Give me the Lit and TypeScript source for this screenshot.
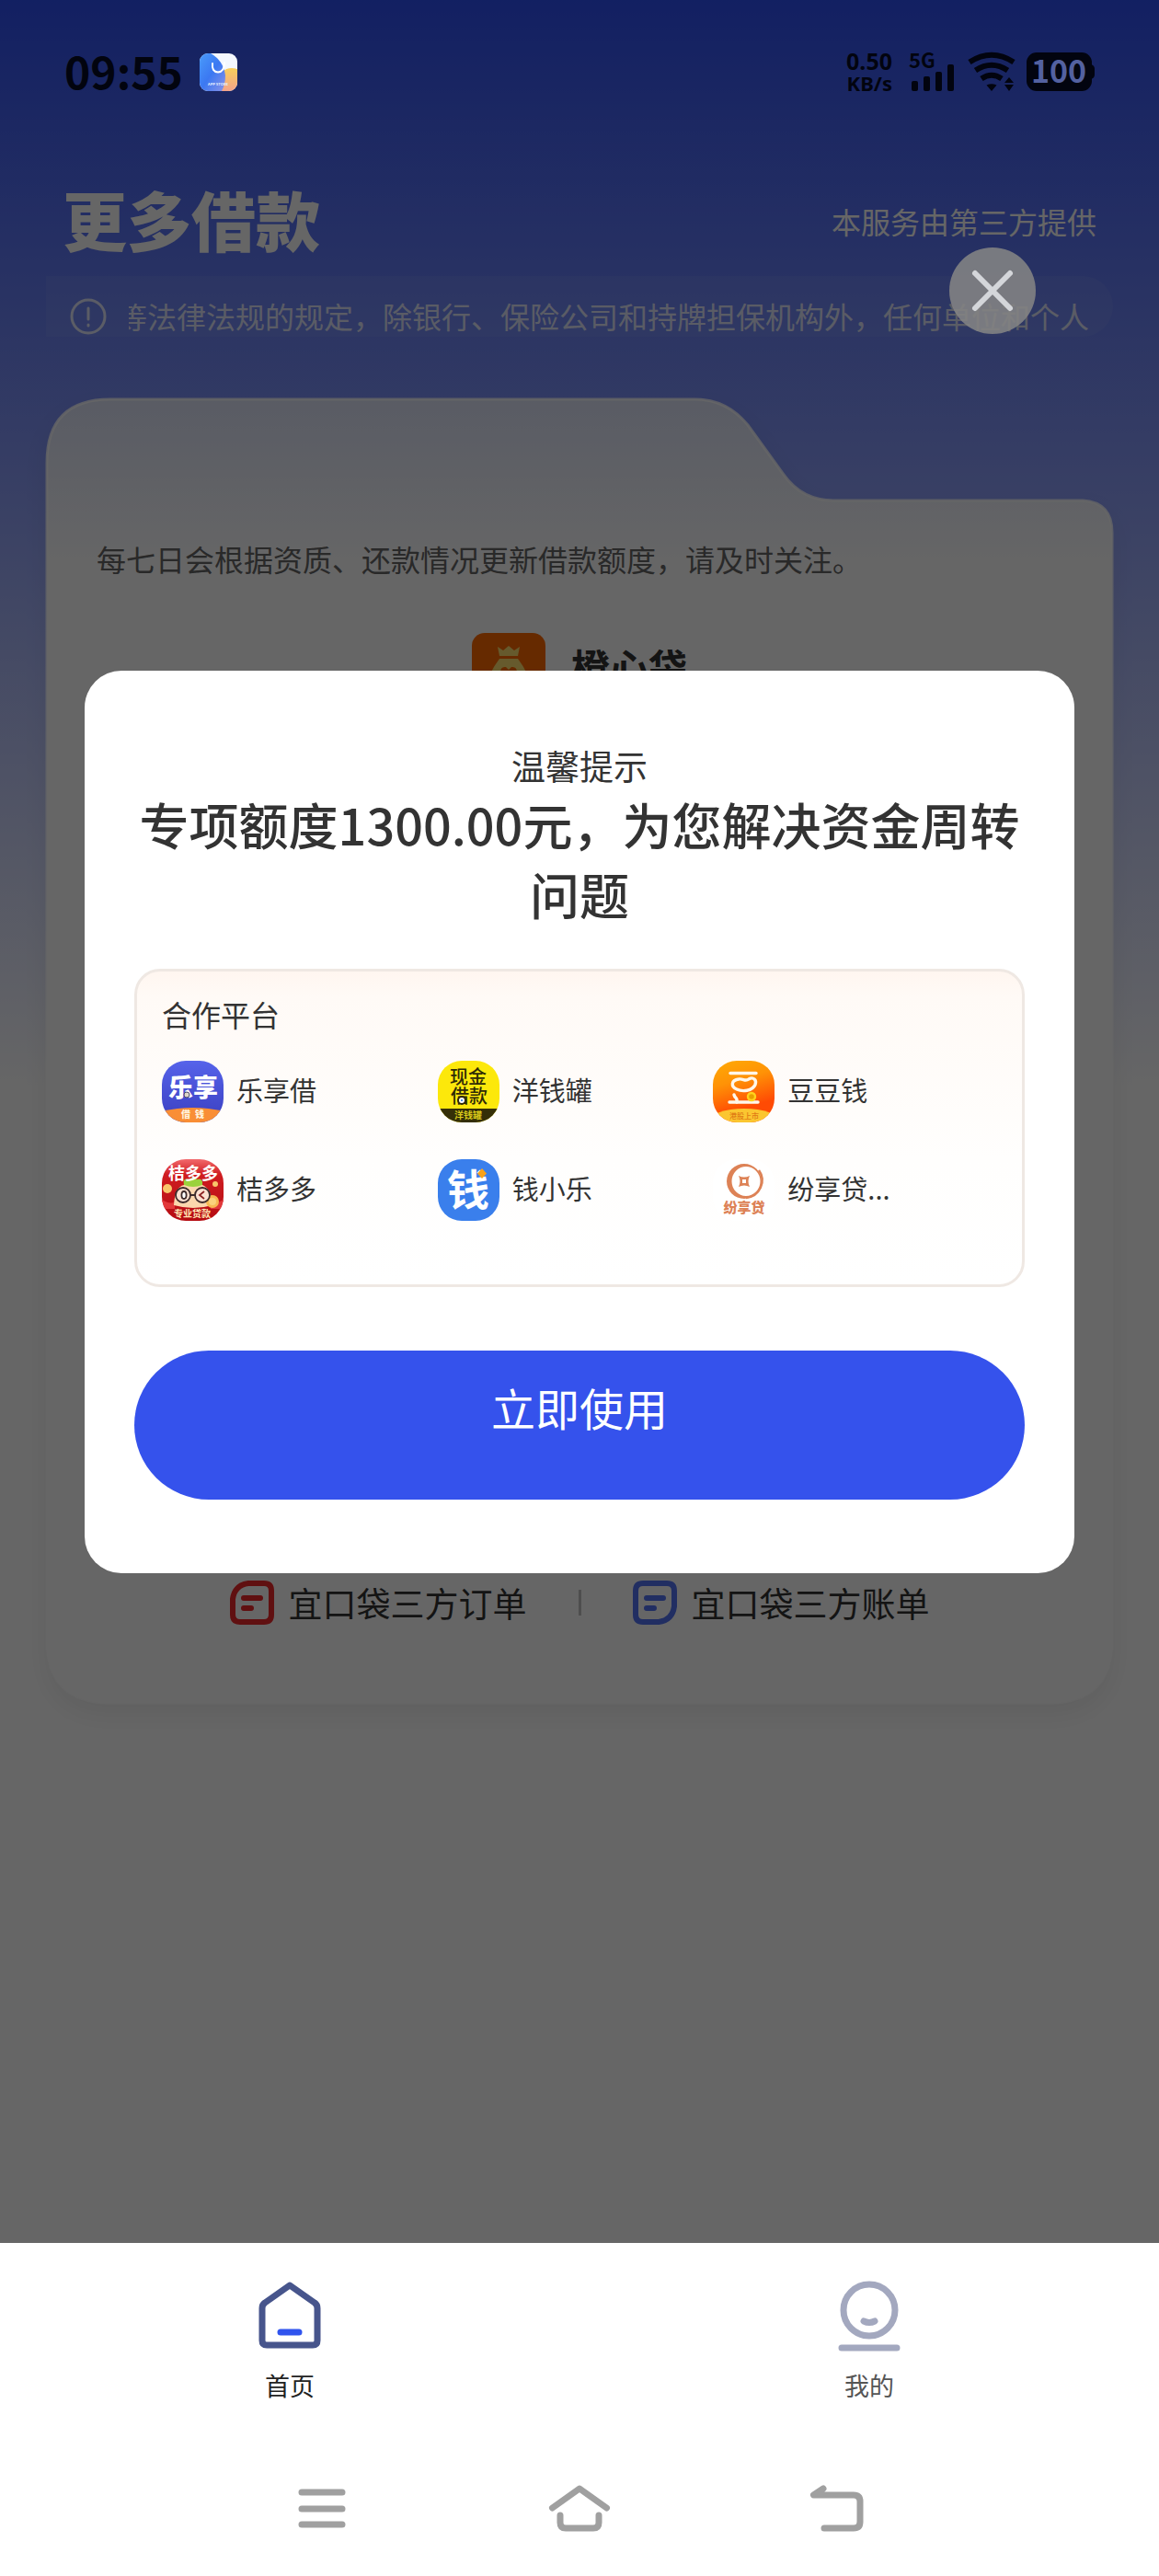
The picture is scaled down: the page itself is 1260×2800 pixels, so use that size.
import { LitElement, html, svg, css, type TemplateResult } from "lit";
import { customElement, state } from "lit/decorators.js";

interface Platform {
  name: string;
  logo: TemplateResult;
}

const logo = (body: TemplateResult) =>
  html`<svg class="logo" viewBox="0 0 67 67" aria-hidden="true">${body}</svg>`;

const platforms: Platform[] = [
  {
    name: "乐享借",
    logo: logo(svg`
      <defs><linearGradient id="lx" x1="0" y1="0" x2="0" y2="1">
        <stop offset="0" stop-color="#5663ea"/><stop offset="1" stop-color="#3a3fc0"/>
      </linearGradient></defs>
      <rect width="67" height="67" fill="url(#lx)"/>
      <text class="mark" x="34" y="39" font-size="27" fill="#fff">乐享</text>
      <circle cx="27" cy="37" r="3" fill="#ddd6c8" stroke="#4a4a6a" stroke-width="1"/>
      <path d="M0 55Q34 47 67 55V67H0Z" fill="#f98e35"/>
      <text class="mark" x="26" y="62" font-size="10" fill="#fff3dc">借</text>
      <text class="mark" x="41" y="62" font-size="10" fill="#fff3dc">钱</text>`),
  },
  {
    name: "洋钱罐",
    logo: logo(svg`
      <rect width="67" height="67" fill="#fce80b"/>
      <text class="mark thin" x="33" y="25" font-size="20" fill="#2e2a06">现金</text>
      <text class="mark thin" x="34" y="46" font-size="20" fill="#2e2a06">借款</text>
      <circle cx="26" cy="43" r="4" fill="#fff" stroke="#2e2a06" stroke-width="2"/>
      <circle cx="26" cy="43" r="1" fill="#1b6fd0"/>
      <rect y="52" width="67" height="15" fill="#352f08"/>
      <text class="mark bold" x="33" y="63" font-size="10" fill="#d9c91a">洋钱罐</text>`),
  },
  {
    name: "豆豆钱",
    logo: logo(svg`
      <defs><linearGradient id="dd" x1="0" y1="0" x2="0.3" y2="1">
        <stop offset="0" stop-color="#ffab05"/><stop offset="0.4" stop-color="#ff9206"/><stop offset="0.85" stop-color="#ff4b04"/>
      </linearGradient></defs>
      <rect width="67" height="67" fill="url(#dd)"/>
      <g fill="none" stroke="#fff7ea" stroke-width="3.4" stroke-linecap="round" stroke-linejoin="round">
        <path d="M19 13.5H47"/>
        <path d="M28 20C33 19 35 23 39 20C44 17 48 21 46 26C43 33 32 34 26 31C19 28 20 21 28 20Z"/>
        <path d="M23 37C24 41 27 40 26 45"/>
        <path d="M18 45H49"/>
      </g>
      <circle cx="42" cy="39" r="4" fill="#e8a000" stroke="#ffd21c" stroke-width="2.4"/>
      <ellipse cx="34" cy="66" rx="38" ry="14" fill="#fbc630"/>
      <text class="mark thin" x="34" y="63" font-size="8" fill="#e07a14">港股上市</text>`),
  },
  {
    name: "桔多多",
    logo: logo(svg`
      <defs><linearGradient id="jd" x1="0" y1="0" x2="0" y2="1">
        <stop offset="0" stop-color="#f2696c"/><stop offset="0.25" stop-color="#cf1c20"/><stop offset="1" stop-color="#b50c12"/>
      </linearGradient></defs>
      <rect width="67" height="67" fill="url(#jd)"/>
      <path d="M0 44Q10 50 14 46V54H0ZM67 44Q57 50 53 46V54H67Z" fill="#e2383a"/>
      <path d="M13 50Q14 30 24 28Q34 22 44 28Q54 32 55 50Q34 56 13 50Z" fill="#fbd7ad"/>
      <path d="M24 28Q22 20 30 22Q34 17 38 22Q45 20 44 28Q34 32 24 28Z" fill="#9bd23c"/>
      <circle cx="6" cy="32" r="5" fill="#f9c56a"/>
      <circle cx="58" cy="27" r="3" fill="#f9c56a"/>
      <circle cx="55" cy="46" r="7" fill="#f7b953"/>
      <circle cx="55" cy="46" r="4" fill="#fbd27c"/>
      <g fill="#fbe0d0" stroke="#3c2b2b" stroke-width="1.8">
        <circle cx="23" cy="39" r="8"/><circle cx="44" cy="39" r="8"/>
        <path d="M31 39H36" fill="none"/>
        <ellipse cx="24" cy="39" rx="2.6" ry="4" fill="#fff"/>
        <path d="M46 35L41 39L46 43" fill="none" stroke="#8c2323"/>
      </g>
      <text class="mark bold" x="34" y="22" font-size="18" fill="#fff">桔多多</text>
      <text class="mark bold" x="33" y="63" font-size="10" fill="#ffe7b5">专业贷款</text>`),
  },
  {
    name: "钱小乐",
    logo: logo(svg`
      <rect width="67" height="67" fill="#3a7fec"/>
      <text class="mark bold" x="33" y="50" font-size="46" fill="#fff">钱</text>
      <path d="M48 10L53 15.500L48 21L43 15.500Z" fill="#f9a11b"/>`),
  },
  {
    name: "纷享贷...",
    logo: logo(svg`
      <rect width="67" height="67" fill="#fff"/>
      <path fill-rule="evenodd" d="M34 5A19 19 0 1 1 34 43A19 19 0 1 1 34 5ZM36 8A15.500 16 0 1 0 36 40A15.500 16 0 1 0 36 8Z" fill="#dd8256"/>
      <path d="M50 12A19 19 0 0 1 36 42" fill="none" stroke="#dd8256" stroke-width="2.500"/>
      <path fill-rule="evenodd" d="M28 18Q34 21 40 18Q37 24 40 30Q34 27 28 30Q31 24 28 18ZM32 22V26H36V22Z" fill="#dd8256"/>
      <text class="mark" x="34" y="58" font-size="15" fill="#dd8256">纷享贷</text>`),
  },
];

@customElement("app-root")
export class AppRoot extends LitElement {
  @state() private open = true;

  static styles = css`
    :host {
      display: block;
      font-family: "Noto Sans CJK SC", "Noto Sans", sans-serif;
      color: #333;
    }
    * {
      box-sizing: border-box;
    }
    h1, h2, p, ul {
      margin: 0;
      padding: 0;
    }
    svg {
      display: block;
      flex: none;
      overflow: visible;
    }
    button {
      border: 0;
      padding: 0;
      background: none;
      font: inherit;
      color: inherit;
      cursor: pointer;
    }
    a {
      color: inherit;
      text-decoration: none;
    }
    .screen {
      min-height: 100vh;
      display: flex;
      flex-direction: column;
      background: #fff;
    }
    .view {
      position: relative;
      flex: 1;
      background: linear-gradient(#2f50f5 0, #fff 1180px);
    }

    .status {
      position: relative;
      z-index: 2;
      display: flex;
      align-items: center;
      gap: 18px;
      height: 156px;
      padding: 0 70px;
      color: #02040f;
    }
    .time {
      font-size: 48px;
      line-height: 60px;
      padding-bottom: 4px;
      font-weight: 700;
    }
    .signals {
      display: flex;
      align-items: center;
      gap: 12px;
      margin-left: auto;
    }
    .rate {
      display: flex;
      flex-direction: column;
      align-items: flex-end;
      font-family: "Noto Sans", sans-serif;
      font-size: 22px;
      line-height: 24px;
      font-weight: 700;
      margin-right: 6px;
    }
    .rate .value {
      font-size: 25px;
    }
    .cell text {
      font-size: 22px;
      font-weight: 700;
    }
    .battery text {
      font-size: 34px;
      font-weight: 700;
      text-anchor: middle;
    }

    .head {
      display: flex;
      align-items: center;
      justify-content: space-between;
      height: 144px;
      padding: 32px 68px 8px;
      color: #fff;
    }
    .head h1 {
      font-size: 70px;
      line-height: 88px;
      padding-bottom: 4px;
      font-weight: 900;
    }
    .head p {
      font-size: 32px;
      line-height: 40px;
      font-weight: 400;
    }
    .notice {
      display: flex;
      align-items: flex-end;
      gap: 24px;
      height: 66px;
      margin: 0 50px;
      padding: 0 26px;
      border-radius: 0 33px 33px 0;
      background: rgba(255, 255, 255, 0.06);
      color: rgba(255, 255, 255, 0.8);
    }
    .ticker {
      display: flex;
      flex: 1;
      min-width: 0;
      justify-content: flex-end;
      overflow: hidden;
      white-space: nowrap;
      font-size: 32px;
      line-height: 46px;
      font-weight: 400;
    }

    .folder {
      position: relative;
      display: flex;
      flex-direction: column;
      justify-content: space-between;
      min-height: 1419px;
      margin: 67px 50px 0;
      padding: 150px 55px 84px;
    }
    .shape {
      position: absolute;
      inset: 0;
      width: 100%;
      height: 100%;
      filter: drop-shadow(0 12px 12px rgba(0, 0, 0, 0.06));
    }
    .intro, .links {
      position: relative;
    }
    .tip {
      font-size: 32px;
      line-height: 48px;
      color: #666;
    }
    .brand {
      display: flex;
      align-items: center;
      justify-content: center;
      gap: 28px;
      margin-top: 57px;
    }
    .brand h2 {
      font-size: 42px;
      line-height: 60px;
      padding-bottom: 8px;
      font-weight: 700;
      color: #333;
    }
    .links {
      display: flex;
      align-items: center;
      justify-content: center;
      gap: 56px;
      font-size: 37px;
      line-height: 52px;
    }
    .links a {
      display: flex;
      align-items: center;
      gap: 16px;
    }
    .bar {
      width: 3px;
      height: 28px;
      background: #c4c4c4;
    }

    .backdrop {
      position: absolute;
      inset: 0;
      z-index: 1;
      display: flex;
      align-items: center;
      justify-content: center;
      padding: 0 92px;
      background: rgba(0, 0, 0, 0.6);
    }
    .dialog {
      position: relative;
      width: 100%;
      padding: 77px 54px 80px;
      border-radius: 40px;
      background: #fff;
      text-align: center;
    }
    .lead {
      font-size: 37px;
      line-height: 52px;
    }
    .headline {
      font-size: 54px;
      line-height: 76px;
      font-weight: 500;
    }
    .close {
      position: absolute;
      top: -459px;
      right: 42px;
    }
    .partners {
      min-height: 346px;
      margin: 43px 0 69px;
      padding: 22px 36px 22px 27px;
      border: 3px solid #efe8e3;
      border-radius: 28px;
      background: linear-gradient(#fff6f0 0, #fffaf6 27px, #fffefd 60%, #fff);
      text-align: left;
    }
    .partners p {
      font-size: 32px;
      line-height: 48px;
    }
    .partners ul {
      display: grid;
      grid-template-columns: repeat(3, 1fr);
      gap: 40px 0;
      margin-top: 27px;
      list-style: none;
    }
    .partners li {
      display: flex;
      align-items: center;
      gap: 14px;
      font-size: 29px;
      line-height: 40px;
    }
    .partners li span {
      padding-bottom: 4px;
    }
    .logo {
      width: 67px;
      height: 67px;
      border-radius: 26px;
      overflow: hidden;
    }
    .mark {
      font-weight: 900;
      text-anchor: middle;
    }
    .mark.bold {
      font-weight: 700;
    }
    .mark.thin {
      font-weight: 500;
    }
    .primary {
      display: block;
      width: 100%;
      height: 162px;
      padding-bottom: 40px;
      border-radius: 81px;
      background: #3552ec;
      color: #fff;
      font-size: 48px;
      line-height: 64px;
    }

    .tabs {
      display: grid;
      grid-template-columns: 1fr 1fr;
      height: 216px;
      padding-top: 40px;
      background: #fff;
    }
    .tabs a {
      display: flex;
      flex-direction: column;
      align-items: center;
      gap: 15px;
      font-size: 27px;
      line-height: 40px;
      color: #555;
    }
    .tabs .on {
      color: #222;
    }
    .system {
      display: grid;
      grid-template-columns: repeat(3, 280px);
      justify-content: center;
      height: 146px;
      background: #fff;
    }
    .system button {
      display: flex;
      align-items: center;
      justify-content: center;
    }
  `;

  private close() {
    this.open = false;
  }

  private renderStatus() {
    return html`
      <div class="status">
        <span class="time">09:55</span>
        <svg width="41" height="41" viewBox="0 0 41 41" aria-hidden="true">
          <defs>
            <clipPath id="store"><rect width="41" height="41" rx="9" /></clipPath>
            <linearGradient id="blue" x1="0" y1="0" x2="1" y2="1">
              <stop offset="0" stop-color="#4a9bfa" /><stop offset="0.5" stop-color="#3b78f2" /><stop offset="1" stop-color="#8b93e8" />
            </linearGradient>
            <linearGradient id="warm" x1="0" y1="0" x2="0" y2="1">
              <stop offset="0" stop-color="#f8cf5b" /><stop offset="1" stop-color="#f39a94" />
            </linearGradient>
          </defs>
          <g clip-path="url(#store)">
            <rect width="41" height="41" fill="#f4f8ff" />
            <circle cx="35" cy="31" r="15" fill="url(#warm)" />
            <path d="M0 0H12Q26 8 28 24Q28 34 24 41H0Z" fill="url(#blue)" />
          </g>
          <path d="M14 11Q13 20 20 20.500Q27 20 27 10" fill="none" stroke="#fff" stroke-width="2" stroke-linecap="round" />
          <text x="20" y="35" font-size="4" font-weight="700" fill="#e5efff" text-anchor="middle">APP STORE</text>
        </svg>
        <div class="signals">
          <div class="rate"><span class="value">0.50</span><span>KB/s</span></div>
          <svg class="cell" width="52" height="42" viewBox="0 0 52 42" aria-label="5G">
            <text x="0" y="17" fill="#02040f">5G</text>
            <g fill="#02040f">
              <rect x="3" y="31" width="7" height="11" rx="2" />
              <rect x="16" y="26" width="7" height="16" rx="2" />
              <rect x="29" y="21" width="7" height="21" rx="2" />
              <rect x="42" y="13" width="7" height="29" rx="2" />
            </g>
          </svg>
          <svg width="52" height="42" viewBox="0 0 52 42" aria-label="Wi-Fi">
            <g fill="none" stroke="#02040f" stroke-width="6">
              <path d="M2 10.500Q26 -5 50 10.500" />
              <path d="M8.500 19.500Q26 8 43.500 19.500" />
              <path d="M15 28.500Q26 21 37 28.500" />
            </g>
            <path d="M20.500 35.500Q26 33 31.500 35.500L26 42Z" fill="#02040f" />
            <path d="M45 27L50 33H40ZM45 42L50 35H40Z" fill="#02040f" />
          </svg>
          <svg class="battery" width="74" height="42" viewBox="0 0 74 42" aria-label="100%">
            <rect width="71" height="42" rx="11" fill="#02040f" />
            <path d="M70 13Q74 14 74 18V24Q74 28 70 29Z" fill="#02040f" />
            <text x="35" y="33" fill="#5361a0">100</text>
          </svg>
        </div>
      </div>
    `;
  }

  private renderFolder() {
    return html`
      <section class="folder">
        <svg class="shape" viewBox="0 0 1160 1419" preserveAspectRatio="none" aria-hidden="true">
          <defs>
            <linearGradient id="paper" gradientUnits="userSpaceOnUse" x1="0" y1="0" x2="0" y2="180">
              <stop offset="0" stop-color="#dfe5fb" /><stop offset="1" stop-color="#fff" />
            </linearGradient>
          </defs>
          <path
            d="M70 1H706Q740 1 763 29L802 83Q822 111 856 111H1127Q1159 113 1159 146V1349Q1159 1418 1090 1418H70Q1 1418 1 1349V70Q1 1 70 1Z"
            fill="url(#paper)" stroke="#fff" stroke-opacity="0.8" stroke-width="3" />
        </svg>
        <div class="intro">
          <p class="tip">每七日会根据资质、还款情况更新借款额度，请及时关注。</p>
          <div class="brand">
            <svg width="80" height="80" viewBox="0 0 80 80" aria-hidden="true">
              <rect width="80" height="80" rx="14" fill="#ff6a00" />
              <path d="M28 15L34 19L40 14L46 19L52 15L50 25H30Z" fill="#ffe070" />
              <path d="M30 28H50Q62 44 62 54Q62 68 40 68Q18 68 18 54Q18 44 30 28Z" fill="#ffe070" />
              <path d="M40 52L31 43Q31 36 37 37L40 40L43 37Q49 36 49 43Z" fill="#ff6a00" />
            </svg>
            <h2>橙心袋</h2>
          </div>
        </div>
        <nav class="links">
          <a href="#orders">
            <svg width="48" height="48" viewBox="0 0 48 48" fill="none" stroke="#f0282c" stroke-width="6" stroke-linecap="round" aria-hidden="true">
              <path d="M20 3H37Q45 3 45 11V37Q45 45 37 45H11Q3 45 3 37V20Q5 5 20 3Z" />
              <path d="M15 19H33M15 30H23" />
            </svg>
            宜口袋三方订单
          </a>
          <span class="bar"></span>
          <a href="#bills">
            <svg width="48" height="48" viewBox="0 0 48 48" fill="none" stroke="#5474f4" stroke-width="6" stroke-linecap="round" aria-hidden="true">
              <path d="M11 3H37Q45 3 45 11V28Q43 43 28 45H11Q3 45 3 37V11Q3 3 11 3Z" />
              <path d="M15 19H33M15 30H23" />
            </svg>
            宜口袋三方账单
          </a>
        </nav>
      </section>
    `;
  }

  private renderDialog() {
    return html`
      <div class="backdrop">
        <div class="dialog" role="dialog" aria-modal="true" aria-labelledby="headline">
          <button class="close" aria-label="关闭" @click=${this.close}>
            <svg width="94" height="94" viewBox="0 0 94 94">
              <circle cx="47" cy="46" r="47" fill="#848484" fill-opacity="0.88" />
              <path d="M28 27L66 65M66 27L28 65" stroke="#d4d6da" stroke-width="6" stroke-linecap="round" />
            </svg>
          </button>
          <p class="lead">温馨提示</p>
          <h2 class="headline" id="headline">专项额度1300.00元，为您解决资金周转问题</h2>
          <div class="partners">
            <p>合作平台</p>
            <ul>
              ${platforms.map((p) => html`<li>${p.logo}<span>${p.name}</span></li>`)}
            </ul>
          </div>
          <button class="primary" @click=${this.close}>立即使用</button>
        </div>
      </div>
    `;
  }

  render() {
    return html`
      <div class="screen">
        <main class="view">
          ${this.renderStatus()}
          <header class="head">
            <h1>更多借款</h1>
            <p>本服务由第三方提供</p>
          </header>
          <div class="notice">
            <svg width="40" height="42" viewBox="0 0 40 42" fill="none" stroke="currentColor" stroke-width="3" stroke-linecap="round" aria-hidden="true">
              <circle cx="20" cy="20" r="18" />
              <path d="M20 11V23M20 29V30" />
            </svg>
            <div class="ticker"><span>等法律法规的规定，除银行、保险公司和持牌担保机构外，任何单位和个人</span></div>
          </div>
          ${this.renderFolder()}
          ${this.open ? this.renderDialog() : null}
        </main>
        <nav class="tabs">
          <a class="on" href="#home">
            <svg width="76" height="80" viewBox="0 0 76 80" fill="none" stroke-linecap="round" stroke-linejoin="round" aria-hidden="true">
              <path d="M38 6L65 25Q68 27 68 31V66Q68 71 63 71H13Q8 71 8 66V31Q8 27 11 25Z" stroke="#47558c" stroke-width="7" />
              <path d="M28 57H48" stroke="#3054ee" stroke-width="7" />
            </svg>
            首页
          </a>
          <a href="#mine">
            <svg width="76" height="80" viewBox="0 0 76 80" fill="none" stroke="#a3a8bf" stroke-width="7" stroke-linecap="round" aria-hidden="true">
              <circle cx="38" cy="33" r="28" />
              <path d="M32 45Q38 48 44 45M8 74H68" />
            </svg>
            我的
          </a>
        </nav>
        <nav class="system">
          <button aria-label="最近任务">
            <svg width="60" height="60" viewBox="0 0 60 60" stroke="#a0a0a0" stroke-width="7" stroke-linecap="round">
              <path d="M8 12H52M8 30H52M8 47H52" />
            </svg>
          </button>
          <button aria-label="主屏幕">
            <svg width="68" height="60" viewBox="0 0 68 60" fill="none" stroke="#a0a0a0" stroke-width="7" stroke-linecap="round" stroke-linejoin="round">
              <path d="M4.500 29L34 8L63.500 29M13 37V45Q13 51 19 51H49Q55 51 55 45V37" />
            </svg>
          </button>
          <button aria-label="返回">
            <svg width="60" height="60" viewBox="0 0 60 60" fill="none" stroke="#a0a0a0" stroke-width="7" stroke-linecap="round" stroke-linejoin="round">
              <path d="M15 8L4.500 15H48Q55 15 55 22V44Q55 51 48 51H16" />
            </svg>
          </button>
        </nav>
      </div>
    `;
  }
}
